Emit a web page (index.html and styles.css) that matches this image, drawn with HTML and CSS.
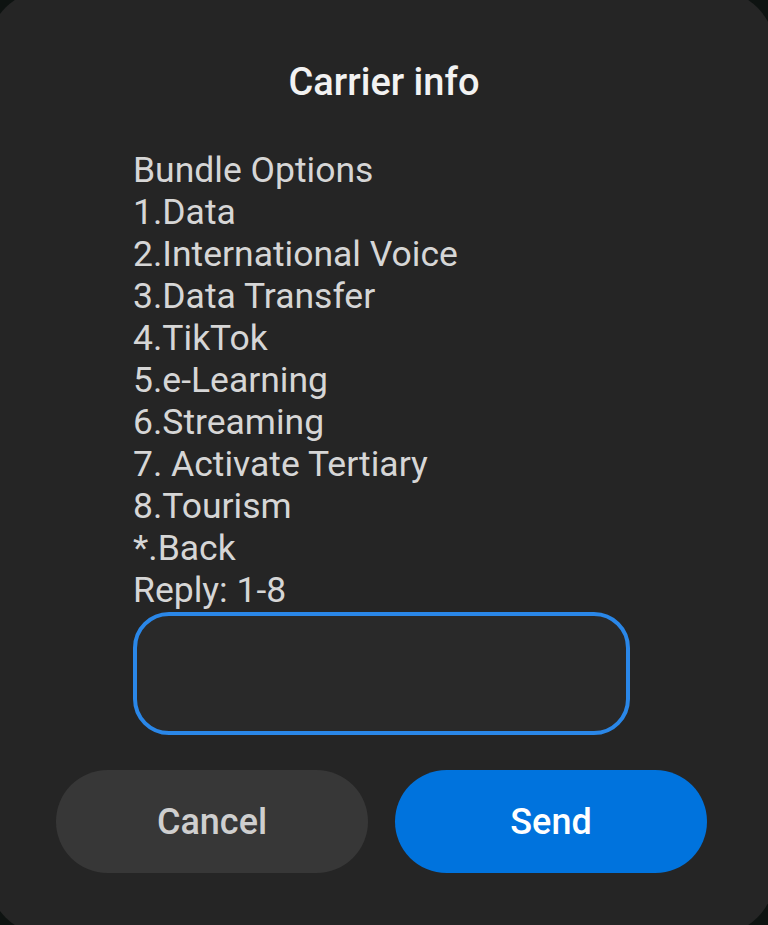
FILE: index.html
```html
<!DOCTYPE html>
<html lang="en">
<head>
    <meta charset="UTF-8">
    <meta name="viewport" content="width=device-width, initial-scale=1.0">
    <title>Carrier info</title>
    <link rel="stylesheet" href="styles.css">
</head>
<body>
    <div class="dialog">
        <h1 class="dialog-title">Carrier info</h1>

        <div class="dialog-body">
            <div class="ussd-message">
                <p>Bundle Options</p>
                <p>1.Data</p>
                <p>2.International Voice</p>
                <p>3.Data Transfer</p>
                <p>4.TikTok</p>
                <p>5.e-Learning</p>
                <p>6.Streaming</p>
                <p>7. Activate Tertiary</p>
                <p>8.Tourism</p>
                <p>*.Back</p>
                <p>Reply: 1-8</p>
            </div>
            <input type="text" class="reply-input" aria-label="Reply">
        </div>

        <div class="dialog-actions">
            <button class="action-button cancel">Cancel</button>
            <button class="action-button send">Send</button>
        </div>
    </div>
</body>
</html>
```

FILE: styles.css
```css
* {
    margin: 0;
    padding: 0;
    box-sizing: border-box;
}

body {
    font-family: Roboto, 'Noto Sans', 'Liberation Sans', sans-serif;
    background: #0e1311;
    width: 768px;
    height: 925px;
    overflow: hidden;
}

.dialog {
    width: 787px;
    height: 945px;
    margin: -10px 0 0 -12px;
    background: #252525;
    border-radius: 60px;
    padding-top: 68px;
}

.dialog-title {
    height: 48px;
    line-height: 48px;
    text-align: center;
    font-size: 38px;
    font-weight: 500;
    color: #f2f2f2;
    padding-left: 12px;
    padding-right: 7px;
}

.dialog-body {
    margin-top: 43px;
    padding-left: 145px;
}

.ussd-message p {
    font-size: 35.5px;
    line-height: 42px;
    height: 42px;
    color: #d6d6d6;
    white-space: nowrap;
}

.reply-input {
    display: block;
    margin-top: 1px;
    width: 497px;
    height: 123px;
    border: 4px solid #2a87e8;
    border-radius: 36px;
    background: #292929;
    outline: none;
}

.dialog-actions {
    display: flex;
    gap: 27px;
    margin-top: 35px;
    padding-left: 68px;
}

.action-button {
    width: 312px;
    height: 103px;
    border: none;
    border-radius: 52px;
    font-family: Roboto, 'Noto Sans', 'Liberation Sans', sans-serif;
    font-size: 36px;
    font-weight: 500;
    cursor: pointer;
}

.action-button.cancel {
    background: #373737;
    color: #cfcfcf;
}

.action-button.send {
    background: #0073dd;
    color: #ffffff;
}
```
